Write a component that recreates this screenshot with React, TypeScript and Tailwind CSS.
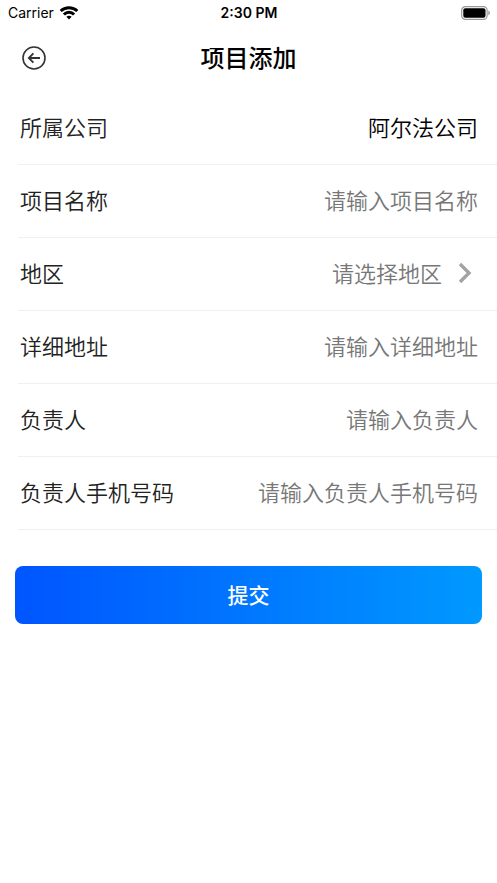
import type { ReactNode } from "react";

const cjk = "font-['Noto_Sans_CJK_SC',sans-serif]";
const control =
  "min-w-0 flex-1 appearance-none bg-transparent text-right text-[22px] leading-8 font-[350] outline-none";

function StatusBar() {
  return (
    <div className="grid h-[26px] grid-cols-3 items-center pr-[7px] pl-2 font-['Inter',sans-serif] text-black">
      <div className="flex items-center gap-[5px] text-sm">
        <span>Carrier</span>
        <svg width="20" height="14" viewBox="0 0 20 14" fill="none" stroke="#000" strokeWidth="3" aria-hidden="true">
          <path d="M1.7 5C6.2 .6 13.8 .6 18.3 5" />
          <path d="M4.9 8.5C7.7 5.6 12.3 5.6 15.1 8.5" />
          <path d="M10 13.4 7.4 10.8C8.9 9.4 11.1 9.4 12.6 10.8Z" fill="#000" stroke="none" />
        </svg>
      </div>
      <span className="text-center text-sm font-semibold">2:30 PM</span>
      <svg className="justify-self-end" width="29" height="14" viewBox="0 0 29 14" aria-hidden="true">
        <rect x=".7" y=".7" width="25.4" height="12.6" rx="3.6" fill="none" stroke="#999" strokeWidth="1.2" />
        <rect x="2.3" y="2.3" width="22.2" height="9.4" rx="2" fill="#000" />
        <path d="M27.4 4.8C29.2 5.4 29.2 8.6 27.4 9.2Z" fill="#888" />
      </svg>
    </div>
  );
}

function Row({ id, label, children }: { id: string; label: string; children: ReactNode }) {
  return (
    <div className="ml-[18px] flex h-[73px] items-center gap-4 border-b border-[#f0f0f0] pr-[19px] pb-1 pl-0.5">
      <label htmlFor={id} className="shrink-0 text-[22px] leading-8 font-[350] text-[#222]">
        {label}
      </label>
      {children}
    </div>
  );
}

function TextRow({ id, label, type = "text" }: { id: string; label: string; type?: string }) {
  return (
    <Row id={id} label={label}>
      <input id={id} type={type} placeholder={"请输入" + label} className={control + " text-black placeholder:text-[#777]"} />
    </Row>
  );
}

export default function App() {
  return (
    <div className={"min-h-screen bg-white " + cjk}>
      <StatusBar />
      <header className="grid h-16 grid-cols-[48px_1fr_48px] items-center">
        <button type="button" aria-label="返回" className="justify-self-end pr-[2px]">
          <svg width="24" height="24" viewBox="0 0 24 24" fill="none" stroke="#333" strokeWidth="1.6" aria-hidden="true">
            <circle cx="12" cy="12" r="11" />
            <path d="M18 12H7M11.4 7.4 6.8 12l4.6 4.6" strokeWidth="1.8" />
          </svg>
        </button>
        <h1 className="pb-0.5 text-center text-2xl font-medium text-black">项目添加</h1>
      </header>
      <form className="pt-0.5">
        <Row id="company" label="所属公司">
          <input id="company" readOnly value="阿尔法公司" className={control + " text-black"} />
        </Row>
        <TextRow id="name" label="项目名称" />
        <Row id="region" label="地区">
          <select id="region" defaultValue="" className={control + " text-[#777]"}>
            <option value="">请选择地区</option>
          </select>
          <svg width="20" height="22" viewBox="0 0 20 22" fill="none" stroke="#a3a3a3" strokeWidth="3.4" aria-hidden="true">
            <path d="M2 3l9 9-9 9" />
          </svg>
        </Row>
        <TextRow id="address" label="详细地址" />
        <TextRow id="owner" label="负责人" />
        <TextRow id="phone" label="负责人手机号码" type="tel" />
        <div className="px-[15px] pt-9">
          <button
            type="button"
            className="h-[58px] w-full rounded-lg bg-linear-to-r/srgb from-[#0055ff] to-[#0099ff] text-[21px] font-medium text-white"
          >
            提交
          </button>
        </div>
      </form>
    </div>
  );
}
